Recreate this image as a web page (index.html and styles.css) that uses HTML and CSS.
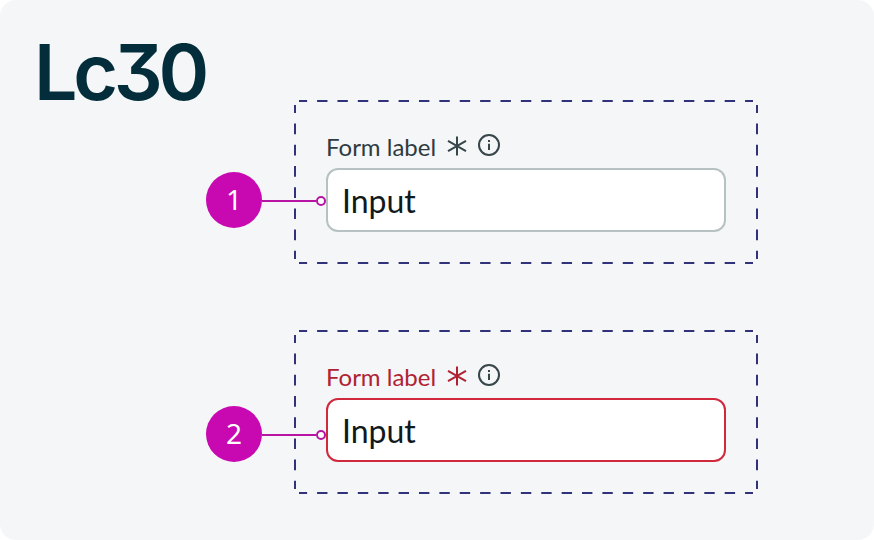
FILE: index.html
```html
<!DOCTYPE html>
<html lang="en">
<head>
    <meta charset="UTF-8">
    <meta name="viewport" content="width=device-width, initial-scale=1.0">
    <title>Form field contrast</title>
    <link rel="stylesheet" href="styles.css">
</head>
<body>
    <main class="card">
        <h1>Lc30</h1>

        <div class="examples">
            <!-- Default state -->
            <section class="example">
                <svg class="frame" width="464" height="164" viewBox="0 0 464 164">
                    <path class="dash-h" d="M5 1H459M5 163H459"/>
                    <path class="dash-v" d="M1 5V159M463 5V159"/>
                </svg>
                <div class="label-row">
                    <label for="field1">Form label</label>
                    <svg class="required" width="20" height="20" viewBox="0 0 20 20">
                        <path d="M10 0.5V19.5M1 4.8L19 15.2M19 4.8L1 15.2"/>
                    </svg>
                    <svg class="info" width="22" height="22" viewBox="0 0 22 22">
                        <circle cx="11" cy="11" r="10"/>
                        <path d="M11 9.8V16M11 6V8"/>
                    </svg>
                </div>
                <input type="text" id="field1" value="Input">
                <div class="marker">
                    <span class="number">1</span>
                    <span class="line"></span>
                    <span class="dot"></span>
                </div>
            </section>

            <!-- Error state -->
            <section class="example error">
                <svg class="frame" width="464" height="164" viewBox="0 0 464 164">
                    <path class="dash-h" d="M5 1H459M5 163H459"/>
                    <path class="dash-v" d="M1 5V159M463 5V159"/>
                </svg>
                <div class="label-row">
                    <label for="field2">Form label</label>
                    <svg class="required" width="20" height="20" viewBox="0 0 20 20">
                        <path d="M10 0.5V19.5M1 4.8L19 15.2M19 4.8L1 15.2"/>
                    </svg>
                    <svg class="info" width="22" height="22" viewBox="0 0 22 22">
                        <circle cx="11" cy="11" r="10"/>
                        <path d="M11 9.8V16M11 6V8"/>
                    </svg>
                </div>
                <input type="text" id="field2" value="Input">
                <div class="marker">
                    <span class="number">2</span>
                    <span class="line"></span>
                    <span class="dot"></span>
                </div>
            </section>
        </div>
    </main>
</body>
</html>
```
FILE: styles.css
```css
* {
    box-sizing: border-box;
}

body {
    margin: 0;
    background-color: #fff;
    font-family: Lato, sans-serif;
}

.card {
    display: flex;
    width: 874px;
    height: 540px;
    background-color: #f4f6f8;
    border-radius: 16px;
}

h1 {
    flex: none;
    width: 258px;
    margin: 0;
    padding: 26px 0 0 34px;
    font-family: Inter, sans-serif;
    font-feature-settings: "cv09" 1;
    font-size: 77px;
    font-weight: 560;
    line-height: 92px;
    letter-spacing: -4.3px;
    color: #032d3a;
}

.examples {
    display: flex;
    flex-direction: column;
    gap: 66px;
    padding: 100px 0 0 36px;
}

.example {
    position: relative;
    width: 464px;
    height: 164px;
    padding: 32px;
}

.frame {
    position: absolute;
    top: 0;
    left: 0;
    fill: none;
    stroke: #32327a;
    stroke-width: 2;
}

.dash-h {
    stroke-dasharray: 10.4 9.98;
    stroke-dashoffset: 2.3;
}

.dash-v {
    stroke-dasharray: 10.7 10.5;
    stroke-dashoffset: 2.6;
}

.label-row {
    display: flex;
    height: 36px;
}

label {
    width: 109px;
    font-size: 24px;
    line-height: 29px;
    white-space: nowrap;
    color: #2e3b3f;
}

.required,
.info {
    fill: none;
    stroke: #37464a;
    stroke-width: 2;
}

.required {
    margin: 4px 0 0 12px;
}

.info {
    margin: 2px 0 0 11px;
}

input {
    display: block;
    width: 400px;
    height: 64px;
    padding: 0 14px;
    border: 2px solid #b7c1c2;
    border-radius: 12px;
    background-color: #fff;
    font-family: inherit;
    font-size: 32px;
    color: #10191b;
}

.marker {
    position: absolute;
    top: 72px;
    left: -88px;
    display: flex;
    align-items: center;
}

.number {
    width: 56px;
    height: 56px;
    border-radius: 50%;
    background-color: #c808b0;
    font-family: "Noto Sans", sans-serif;
    font-size: 28px;
    line-height: 55px;
    text-align: center;
    color: #fff;
}

.line {
    width: 54px;
    height: 2px;
    margin-top: 2px;
    background-color: #b814a4;
}

.dot {
    width: 10px;
    height: 10px;
    margin-top: 2px;
    border: 2px solid #b814a4;
    border-radius: 50%;
    background-color: #fff;
}

.error label {
    color: #b02232;
}

.error .required {
    stroke: #b02232;
}

.error input {
    border-color: #d0293d;
}

.error .marker {
    top: 76px;
}
```
